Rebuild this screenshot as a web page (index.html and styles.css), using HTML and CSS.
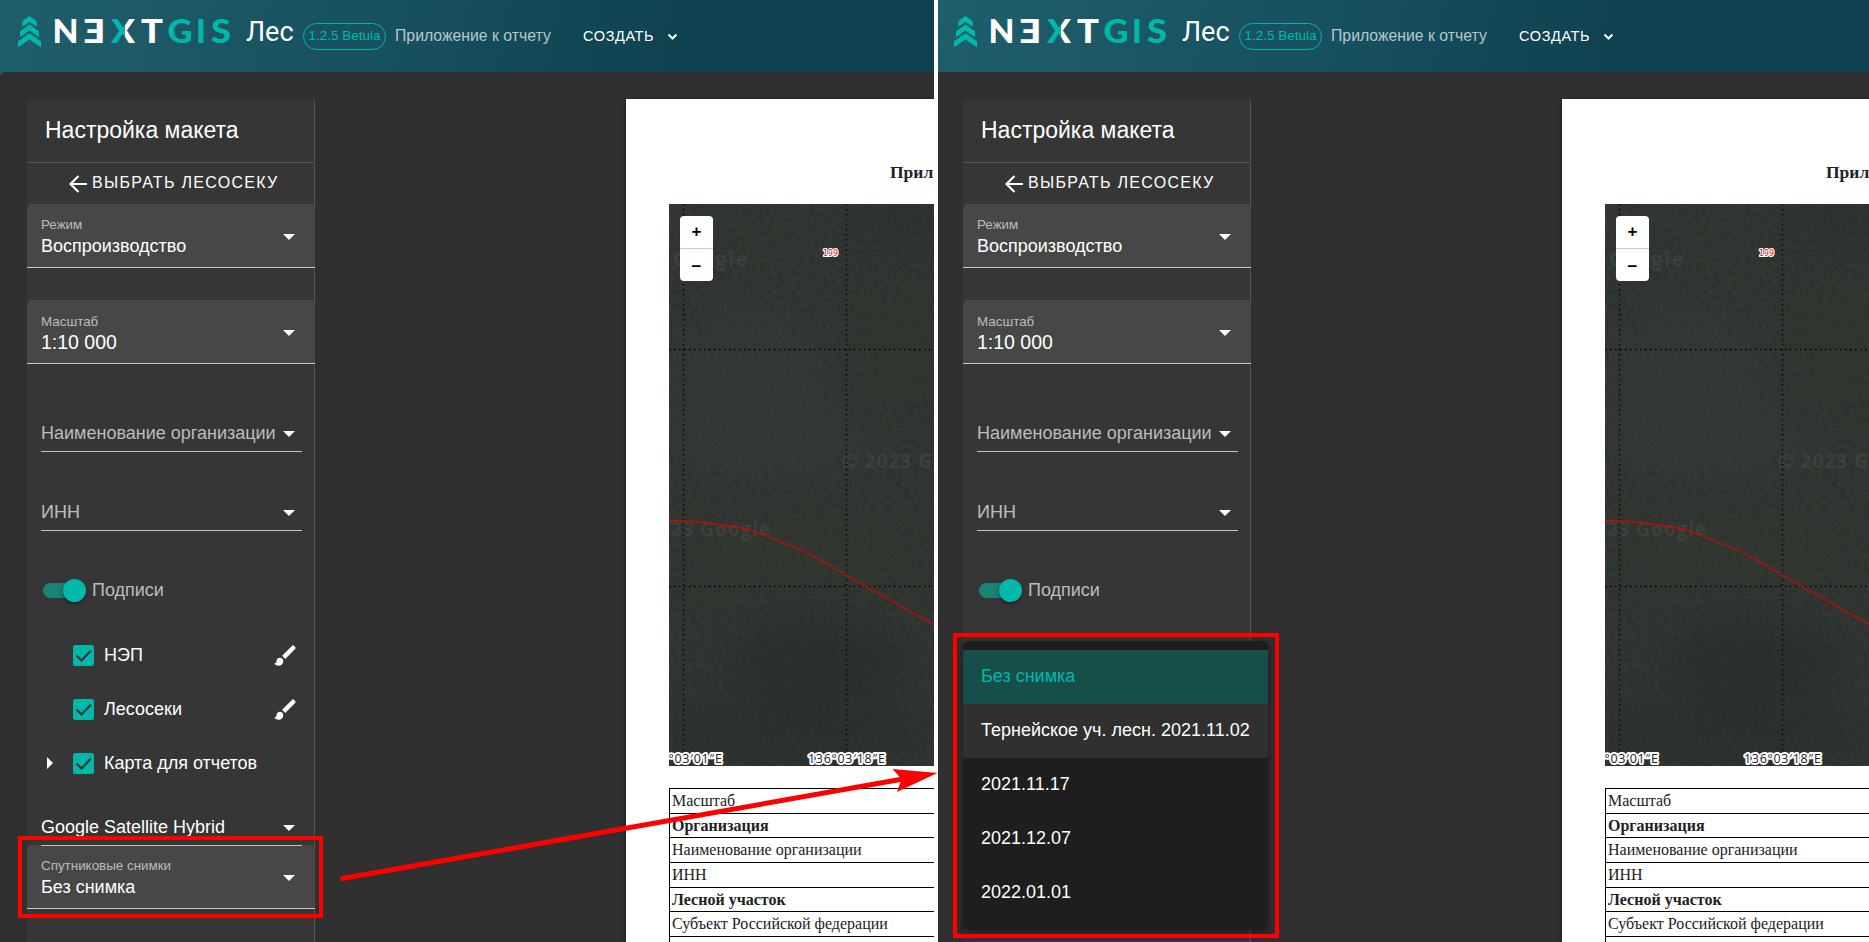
FILE: index.html
```html
<!DOCTYPE html>
<html lang="ru">
<head>
<meta charset="utf-8">
<title>NextGIS Лес</title>
<link rel="stylesheet" href="styles.css">
</head>
<body>
<svg class="defs" width="0" height="0">
  <defs>
    <linearGradient id="xfill" x1="0" x2="1" y1="0" y2="0"><stop offset=".56" stop-color="#00b8a9"/><stop offset=".56" stop-color="#fff"/></linearGradient>
    <filter id="grain" x="0" y="0" width="100%" height="100%" color-interpolation-filters="sRGB">
      <feTurbulence type="fractalNoise" baseFrequency=".22" numOctaves="3" seed="8"/>
      <feColorMatrix values="0.08 0 0 0 .150  0.04 0.05 0 0 .163  0 0 .07 0 .156  0 0 0 0 1"/>
    </filter>
    <filter id="soft" x="-50%" y="-50%" width="200%" height="200%" color-interpolation-filters="sRGB"><feGaussianBlur stdDeviation="20"/></filter>
    <filter id="faint"><feGaussianBlur stdDeviation=".7"/></filter>
    <symbol id="logo" viewBox="0 0 220 40">
      <path fill="#00b8a9" d="M11.500 4 18.700 9.300v5.500L11.500 9.800 4.300 14.800V9.300zM11.500 12.400 21 19.200v6L11.500 18.600 2 25.200V19.200zM11.500 21.200 23 29.300v6L11.500 27.400 0 35.300V29.300z"/>
      <g font-family="Lato" font-weight="900" font-size="32.500" fill="#fff">
        <text x="34.500" y="31" textLength="26" lengthAdjust="spacingAndGlyphs">N</text>
        <text x="65.500" y="31" textLength="22" lengthAdjust="spacingAndGlyphs">Ǝ</text>
        <text x="93" y="31" textLength="24" lengthAdjust="spacingAndGlyphs" fill="url(#xfill)">X</text>
        <text x="123" y="31" textLength="22" lengthAdjust="spacingAndGlyphs">T</text>
        <text x="149.500" y="31" fill="#00b8a9" textLength="25" lengthAdjust="spacingAndGlyphs">G</text>
        <text x="178" y="31" fill="#00b8a9">I</text>
        <text x="193" y="31" fill="#00b8a9" textLength="20" lengthAdjust="spacingAndGlyphs">S</text>
      </g>
    </symbol>
    <symbol id="brush" viewBox="0 0 24 24"><path fill="#fff" d="M7 14c-1.660 0-3 1.340-3 3 0 1.310-1.160 2-2 2 .920 1.220 2.490 2 4 2 2.210 0 4-1.790 4-4 0-1.660-1.340-3-3-3m13.710-9.370-1.340-1.340c-.390-.390-1.020-.390-1.410 0L9 12.250 11.750 15l8.960-8.960c.390-.390.390-1.020 0-1.410z"/></symbol>
    <symbol id="map" viewBox="0 0 266 562">
      <rect width="266" height="562" filter="url(#grain)"/>
      <g filter="url(#soft)" opacity=".5">
        <ellipse cx="235" cy="15" rx="55" ry="30" fill="#2b2e35"/>
        <ellipse cx="80" cy="160" rx="80" ry="55" fill="#36393d"/>
        <ellipse cx="95" cy="235" rx="110" ry="35" fill="#363b3e"/>
        <ellipse cx="150" cy="460" rx="90" ry="40" fill="#25292d"/>
        <ellipse cx="120" cy="530" rx="150" ry="30" fill="#272b29"/>
        <ellipse cx="130" cy="350" rx="130" ry="30" fill="#303730"/>
        <ellipse cx="230" cy="140" rx="40" ry="50" fill="#2e372d"/>
      </g>
      <g filter="url(#faint)" font-family="Open Sans" font-weight="700" font-size="19" fill="#fff" fill-opacity=".06">
        <text x="4" y="62" letter-spacing="1.800">Google</text><text x="173" y="264" letter-spacing="1">© 2023 G</text><text x="-10" y="332" letter-spacing="1">023 Google</text>
      </g>
      <g stroke="#000" stroke-dasharray="1.500 3.500" stroke-width="1.300" fill="none"><path d="M14.500 0V562M177.500 0V562M0 145.500H266M0 382.500H266"/></g>
      <path d="M0 316.500 25 317.500 56 321 81 326 110 337 139 349 177 371 196 382 240 407 266 421" stroke="#c80b08" stroke-width="1.300" fill="none"/>
      <text x="154" y="52" font-family="DejaVu Sans" font-size="8" textLength="15" fill="#e0202a" stroke="#fff" stroke-width="2" paint-order="stroke">199</text>
      <g font-family="Open Sans" font-size="12.500" fill="#222" stroke="#fff" stroke-width="4" stroke-linejoin="round" paint-order="stroke">
        <text x="-24" y="559" textLength="77">136°03′01″E</text><text x="139" y="559" textLength="77">136°03′18″E</text>
      </g>
    </symbol>
  </defs>
</svg>
<main class="board">
  <section class="pane">
    <div class="app">
      <header class="bar">
        <svg class="logo" width="220" height="40"><use href="#logo"/></svg>
        <span class="product">Лес</span><span class="chip">1.2.5 Betula</span>
        <span class="crumb">Приложение к отчету</span>
        <span class="create">СОЗДАТЬ</span>
        <svg class="chev" width="12" height="8"><path d="M1.500 1.500 5.500 5.500l4-4" fill="none" stroke="#fff" stroke-width="2"/></svg>
      </header>
      <div class="work rounded">
        <aside class="panel">
          <h1 class="title">Настройка макета</h1>
          <div class="back"><svg width="18" height="18"><path d="M18 9H2M9.500 1 1.500 9l8 8" fill="none" stroke="#fff" stroke-width="2.200"/></svg><span>ВЫБРАТЬ ЛЕСОСЕКУ</span></div>
          <div class="field"><div><small>Режим</small><b>Воспроизводство</b></div><i class="caret"></i></div>
          <div class="field scale"><div><small>Масштаб</small><b>1:10 000</b></div><i class="caret"></i></div>
          <div class="line org"><span>Наименование организации</span><i class="caret"></i></div>
          <div class="line inn"><span>ИНН</span><i class="caret"></i></div>
          <div class="toggle"><i class="switch"></i><span>Подписи</span></div>
          <div class="layers">
            <div class="layer"><i class="twist"></i><svg class="check" viewBox="0 0 21 21"><path d="m3.500 10.500 5 5 9.500-10" /></svg><span>НЭП</span><svg class="brush"><use href="#brush"/></svg></div>
            <div class="layer"><i class="twist"></i><svg class="check" viewBox="0 0 21 21"><path d="m3.500 10.500 5 5 9.500-10" /></svg><span>Лесосеки</span><svg class="brush"><use href="#brush"/></svg></div>
            <div class="layer"><i class="twist on"></i><svg class="check" viewBox="0 0 21 21"><path d="m3.500 10.500 5 5 9.500-10" /></svg><span>Карта для отчетов</span></div>
          </div>
          <div class="line base"><span>Google Satellite Hybrid</span><i class="caret"></i></div>
          <div class="field sat"><div><small>Спутниковые снимки</small><b>Без снимка</b></div><i class="caret"></i></div>
        </aside>
        <article class="sheet">
          <h2>Прил</h2>
          <div class="mapbox"><svg width="266" height="562"><use href="#map"/></svg><div class="zoom"><span>+</span><span>−</span></div></div>
          <div class="table"><p>Масштаб</p><p class="strong">Организация</p><p>Наименование организации</p><p>ИНН</p><p class="strong">Лесной участок</p><p>Субъект Российской федерации</p><p></p></div>
        </article>
      </div>
    </div>
  </section>
  <section class="pane second">
    <div class="app">
      <header class="bar">
        <svg class="logo" width="220" height="40"><use href="#logo"/></svg>
        <span class="product">Лес</span><span class="chip">1.2.5 Betula</span>
        <span class="crumb">Приложение к отчету</span>
        <span class="create">СОЗДАТЬ</span>
        <svg class="chev" width="12" height="8"><path d="M1.500 1.500 5.500 5.500l4-4" fill="none" stroke="#fff" stroke-width="2"/></svg>
      </header>
      <div class="work">
        <aside class="panel">
          <h1 class="title">Настройка макета</h1>
          <div class="back"><svg width="18" height="18"><path d="M18 9H2M9.500 1 1.500 9l8 8" fill="none" stroke="#fff" stroke-width="2.200"/></svg><span>ВЫБРАТЬ ЛЕСОСЕКУ</span></div>
          <div class="field"><div><small>Режим</small><b>Воспроизводство</b></div><i class="caret"></i></div>
          <div class="field scale"><div><small>Масштаб</small><b>1:10 000</b></div><i class="caret"></i></div>
          <div class="line org"><span>Наименование организации</span><i class="caret"></i></div>
          <div class="line inn"><span>ИНН</span><i class="caret"></i></div>
          <div class="toggle"><i class="switch"></i><span>Подписи</span></div>
        </aside>
        <article class="sheet">
          <h2>Прил</h2>
          <div class="mapbox"><svg width="266" height="562"><use href="#map"/></svg><div class="zoom"><span>+</span><span>−</span></div></div>
          <div class="table"><p>Масштаб</p><p class="strong">Организация</p><p>Наименование организации</p><p>ИНН</p><p class="strong">Лесной участок</p><p>Субъект Российской федерации</p><p></p></div>
        </article>
      </div>
    </div>
  </section>
  <div class="menu"><div class="active">Без снимка</div><div class="hover">Тернейское уч. лесн. 2021.11.02</div><div>2021.11.17</div><div>2021.12.07</div><div>2022.01.01</div></div>
  <svg class="marks" width="1869" height="942" fill="none" stroke="#f00">
    <rect x="20" y="838" width="301" height="78" stroke-width="4"/>
    <rect x="955" y="635" width="322" height="301" stroke-width="4"/>
    <path d="M342.500 878.500 903 779" stroke-width="5" stroke-linecap="round"/>
    <path d="m937.500 773-45-4 9 10-4.500 13z" fill="#f00" stroke="none"/>
  </svg>
</main>
</body>
</html>
```
FILE: styles.css
```css
* { box-sizing: border-box; }
body { margin: 0; background: #fff; overflow: hidden; font-family: "Liberation Sans", Arial, sans-serif; color: #fff; }
.defs { position: absolute; }
.board { position: relative; display: grid; grid-template-columns: 934px 931px; column-gap: 4px; width: 1869px; height: 942px; overflow: hidden; }
.pane { overflow: hidden; height: 942px; background: #1f5c69; }
.app { width: 936px; }
.second .app { margin-left: -2px; }
.bar { display: flex; height: 72px; background: linear-gradient(100deg, #205e6b 0%, #17505f 42%, #0e4250 72%, #0d414f 100%); white-space: nowrap; }
.logo { margin: 12px 0 0 18px; flex: none; }
.product { width: 57px; margin: 14px 0 0 8px; font: 27px/36px Roboto, sans-serif; }
.chip { width: 83px; height: 27px; margin-top: 23px; border: 1px solid #00b8a9; border-radius: 14px; color: #00b8a9; font-size: 13.5px; line-height: 23px; text-align: center; }
.crumb { width: 189px; margin: 26px 0 0 9px; font-size: 15.8px; line-height: 20px; color: rgba(255,255,255,.7); }
.create { width: 84px; margin: 26px 0 0 -1px; font-size: 14.5px; line-height: 20px; letter-spacing: .6px; }
.chev { margin-top: 33px; }
.work { display: flex; align-items: flex-start; height: 870px; padding: 27px 0 0 27px; background: #303030; }
.rounded { border-radius: 5px 0 0 0; }
.panel { width: 288px; height: 843px; flex: none; background: #363636; border-right: 1px solid #545454; white-space: nowrap; }
.title { height: 64px; margin: 0 -1px 0 0; padding: 0 18px; border-bottom: 1px solid #545454; font-size: 23px; font-weight: 400; line-height: 62px; }
.back { display: flex; align-items: center; height: 41px; padding-left: 42px; font-size: 16px; letter-spacing: 1.3px; }
.back svg { margin: 0 5px 0 0; }
.back span { margin-top: -2px; }
.field { display: flex; height: 64px; margin-right: -1px; padding: 12px 20.5px 0 14px; background: #474747; border-bottom: 1px solid #c9c9c9; border-radius: 5px 5px 0 0; justify-content: space-between; }
.field small { display: block; font-size: 13.4px; line-height: 18px; color: #bcbcbc; }
.field b { display: block; font-weight: 400; font-size: 18px; line-height: 24px; }
.caret { width: 0; height: 0; border: 6px solid transparent; border-top-color: #fff; border-bottom: 0; flex: none; }
.field .caret { margin-top: 18px; }
.scale { margin-top: 32px; }
.scale small { padding-top: 1px; height: 18px; }
.scale b { font-size: 19.5px; line-height: 25px; }
.line { display: flex; height: 36px; width: 261px; margin-left: 14px; padding: 5px 7.5px 0 0; justify-content: space-between; border-bottom: 1px solid #c3c3c3; font-size: 18px; line-height: 24px; color: #bcbcbc; }
.line .caret { margin-top: 10px; }
.org { margin-top: 52px; }
.inn { margin-top: 43px; }
.toggle { display: flex; align-items: center; margin: 47px 0 0 16px; height: 24px; font-size: 18px; color: #bcbcbc; gap: 6px; }
.toggle span { margin-top: 1px; }
.switch { position: relative; width: 43px; height: 15px; border-radius: 8px; background: linear-gradient(90deg, #1b8277 55%, #363636 55%); }
.switch::after { content: ""; position: absolute; left: 20px; top: -4px; width: 23px; height: 23px; border-radius: 50%; background: #00b8a9; box-shadow: 0 2px 4px rgba(0,0,0,.4); }
.layers { margin-top: 26px; }
.layer { display: flex; align-items: center; height: 54px; font-size: 18px; padding: 0 15px 0 20px; }
.layer span { margin: 0 auto 0 10px; }
.twist { width: 6px; margin-right: 20px; border: 6px solid transparent; border-right: 0; }
.twist.on { border-left-color: #fff; }
.check { width: 21px; height: 21px; border-radius: 2.5px; background: #00b8a9; }
.check path { fill: none; stroke: #363636; stroke-width: 2.2; }
.brush { width: 27px; height: 27px; }
.base { margin-top: 20px; color: #fff; }
.sat { margin-top: -1px; background: linear-gradient(#c3c3c3, #c3c3c3) 14px 0 / 261px 1px no-repeat #474747; }
.sheet { width: 310px; height: 843px; flex: none; margin-left: 311px; background: #fff; box-shadow: 0 2px 6px rgba(0,0,0,.4); color: #222; font-family: "Liberation Serif", "Times New Roman", serif; white-space: nowrap; overflow: hidden; }
.sheet h2 { margin: 62px 0 0 264px; font-size: 17.5px; line-height: 22px; }
.mapbox { position: relative; height: 562px; width: 267px; margin: 21px 0 0 43px; overflow: hidden; background: #2e352f; }
.mapbox > svg { display: block; }
.zoom { position: absolute; left: 11px; top: 12px; width: 33px; height: 65px; border-radius: 4px; background: #fff; color: #000; font: bold 17px/32px "Liberation Sans", sans-serif; text-align: center; }
.zoom span { display: block; height: 32px; }
.zoom span + span { height: 33px; border-top: 1px solid #ccc; line-height: 36px; }
.table { margin: 22px 0 0 43px; border-left: 1px solid #000; border-top: 1px solid #000; }
.table p { margin: 0; height: 24.65px; padding-left: 2px; border-bottom: 1px solid #000; font-size: 16px; line-height: 24px; }
.table .strong { font-weight: 700; }
.menu { position: absolute; left: 963px; top: 641px; width: 305px; height: 288px; padding: 9px 0; border-radius: 5px; background: #1e1e1e; box-shadow: 0 4px 10px rgba(0,0,0,.5); font-size: 18px; line-height: 52px; white-space: nowrap; }
.menu div { height: 54px; padding-left: 18px; }
.menu .active { background: #164f49; color: #00b8a9; }
.menu .hover { background: #303030; }
.marks { position: absolute; left: 0; top: 0; }
```
